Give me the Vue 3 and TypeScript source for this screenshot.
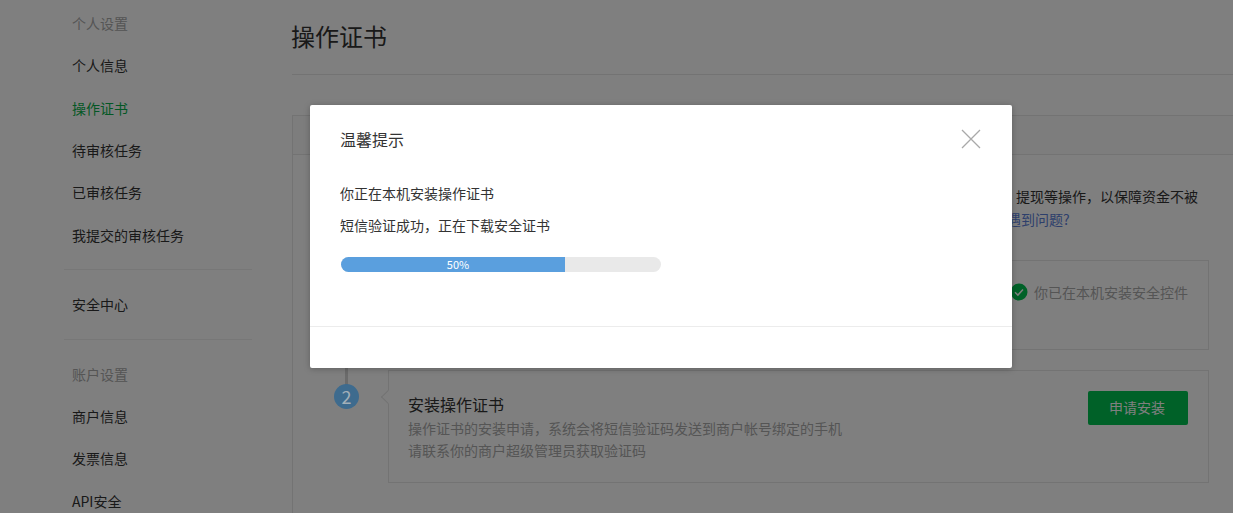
<script setup lang="ts">
const groups = [
  { title: '个人设置', items: ['个人信息', '操作证书', '待审核任务', '已审核任务', '我提交的审核任务'] },
  { title: '', items: ['安全中心'] },
  { title: '账户设置', items: ['商户信息', '发票信息', 'API安全'] },
]
const active = '操作证书'
const progressWidth = 70
</script>

<template>
  <div class="page">
    <aside class="side">
      <section v-for="(g, i) in groups" :key="i" class="group">
        <div v-if="g.title" class="group-title">{{ g.title }}</div>
        <a v-for="it in g.items" :key="it" class="nav" :class="{ on: it === active }">{{ it }}</a>
      </section>
    </aside>
    <main class="main">
      <h1 class="title">操作证书</h1>
      <div class="card">
        <div class="card-head"></div>
        <div class="card-body">
          <div class="intro">
            <p class="intro-line">提现等操作，以保障资金不被</p>
            <a class="link">遇到问题?</a>
          </div>
          <div class="step step-one">
            <div class="box">
              <div class="done">
                <svg class="check" width="18" height="18" viewBox="0 0 18 18">
                  <circle cx="9" cy="9" r="8.5" fill="#00c250" />
                  <path d="M5 9.2l2.9 2.9L13 6.6" fill="none" stroke="#fff" stroke-width="1.5" />
                </svg>
                <span>你已在本机安装安全控件</span>
              </div>
            </div>
          </div>
          <div class="step step-two">
            <div class="box box-two">
              <span class="arrow"></span>
              <div class="copy">
                <h3>安装操作证书</h3>
                <p>操作证书的安装申请，系统会将短信验证码发送到商户帐号绑定的手机</p>
                <p>请联系你的商户超级管理员获取验证码</p>
              </div>
              <button class="apply">申请安装</button>
            </div>
          </div>
        </div>
      </div>
    </main>
    <div class="mask"></div>
    <div class="marker"><i class="line"></i><b class="num">2</b></div>
    <div class="dialog">
      <header class="dlg-head">
        <span>温馨提示</span>
        <svg class="close" width="20" height="20" viewBox="0 0 20 20">
          <path d="M1 1l18 18M19 1L1 19" stroke="#a9a9a9" stroke-width="1.3" fill="none" />
        </svg>
      </header>
      <div class="dlg-body">
        <p>你正在本机安装操作证书</p>
        <p>短信验证成功，正在下载安全证书</p>
        <div class="track">
          <div class="fill" :style="{ width: progressWidth + '%' }">50%</div>
        </div>
      </div>
      <footer class="dlg-foot"></footer>
    </div>
  </div>
</template>

<style>
html, body { margin: 0; background: #fff; }
</style>

<style scoped>
.page {
  position: relative;
  display: flex;
  width: 1233px;
  height: 513px;
  overflow: hidden;
  font-family: "Noto Sans CJK SC", "Liberation Sans", sans-serif;
  font-size: 14px;
  color: #333;
  background: #fff;
}
.side { width: 252px; flex: none; padding: 2.1px 0 0 64px; box-sizing: border-box; }
.group { width: 188px; }
.group + .group { border-top: 1px solid #eee; margin-top: 13px; padding-top: 13px; }
.group:last-child { margin-top: 14px; padding-top: 12.6px; }
.group-title { height: 42.3px; line-height: 42.3px; padding-left: 8px; color: #aaa; }
.nav { display: block; height: 42.3px; line-height: 42.3px; padding-left: 8px; color: #333; }
.nav.on { color: #07b04a; }
.main { flex: 1; min-width: 0; padding-left: 40px; }
.title {
  margin: 0;
  height: 74px;
  line-height: 72px;
  text-indent: -1px;
  font-size: 24px;
  font-weight: 400;
  color: #333;
  border-bottom: 1px solid #e6e6e6;
}
.card { width: 1000px; margin-top: 40px; border: 1px solid #e6e6e6; box-sizing: border-box; height: 500px; }
.card-head { height: 38px; border-bottom: 1px solid #e6e6e6; background: #fafafa; }
.card-body { width: 916px; padding: 30px 0 0 23px; }
.intro { margin-left: 691px; line-height: 23px; color: #333; }
.intro-line { margin: 0; padding-left: 9px; }
.link { display: block; color: #5b7fd8; }
.step { margin-left: 72px; }
.step-one { margin-top: 29px; }
.step-two { margin-top: 20px; }
.box { position: relative; width: 821px; box-sizing: border-box; border: 1px solid #e6e6e6; }
.step-one .box { height: 90px; }
.done { display: flex; align-items: center; gap: 6px; padding: 21px 0 0 621px; color: #aaa; }
.check { flex: none; }
.box-two { display: flex; justify-content: space-between; height: 113px; padding: 20px 20px 0 19px; }
.arrow {
  position: absolute;
  left: -6px;
  top: 21px;
  width: 10px;
  height: 10px;
  background: #fff;
  border-left: 1px solid #e6e6e6;
  border-bottom: 1px solid #e6e6e6;
  transform: rotate(45deg);
  box-sizing: border-box;
}
.copy h3 { margin: 0; font-size: 16px; font-weight: 400; line-height: 26px; color: #333; }
.copy p { margin: 0; line-height: 22px; color: #aaa; }
.apply {
  width: 100px;
  height: 34px;
  padding: 0 2px 2px 0;
  border: 0;
  border-radius: 2px;
  background: #00c250;
  color: #fff;
  font: inherit;
}
.mask { position: absolute; inset: 0; background: rgba(0, 0, 0, 0.5); z-index: 1; }
.marker { position: absolute; left: 334px; top: 350px; width: 25px; height: 59px; z-index: 2; }
.line { position: absolute; left: 11px; top: 0; width: 3px; height: 36px; background: #6b6b6b; }
.num {
  position: absolute;
  left: 0;
  top: 34px;
  width: 25px;
  height: 25px;
  border-radius: 50%;
  background: #3e6b8e;
  color: #a3afb8;
  font-weight: 400;
  font-size: 18px;
  line-height: 25px;
  text-align: center;
}
.dialog {
  position: absolute;
  left: 310px;
  top: 105px;
  width: 702px;
  height: 263px;
  z-index: 3;
  background: #fff;
  border-radius: 2px;
  box-shadow: 0 1px 6px rgba(0, 0, 0, 0.25);
  display: flex;
  flex-direction: column;
}
.dlg-head {
  display: flex;
  justify-content: space-between;
  align-items: center;
  padding: 23px 30px 0;
  font-size: 16px;
  line-height: 22px;
  color: #333;
}
.close { margin-right: 1px; }
.dlg-body { flex: 1; padding: 33px 30px 0; }
.dlg-body p { margin: 0 0 12px; line-height: 20px; color: #333; }
.track {
  width: 320px;
  height: 15px;
  margin: 22px 0 0 1px;
  border-radius: 8px;
  background: #e9e9e9;
  overflow: hidden;
}
.fill {
  height: 15px;
  line-height: 15px;
  padding-left: 10px;
  box-sizing: border-box;
  background: #5a9fde;
  color: #fff;
  font-size: 11px;
  text-align: center;
}
.dlg-foot { height: 42px; border-top: 1px solid #ececec; box-sizing: border-box; }
</style>
